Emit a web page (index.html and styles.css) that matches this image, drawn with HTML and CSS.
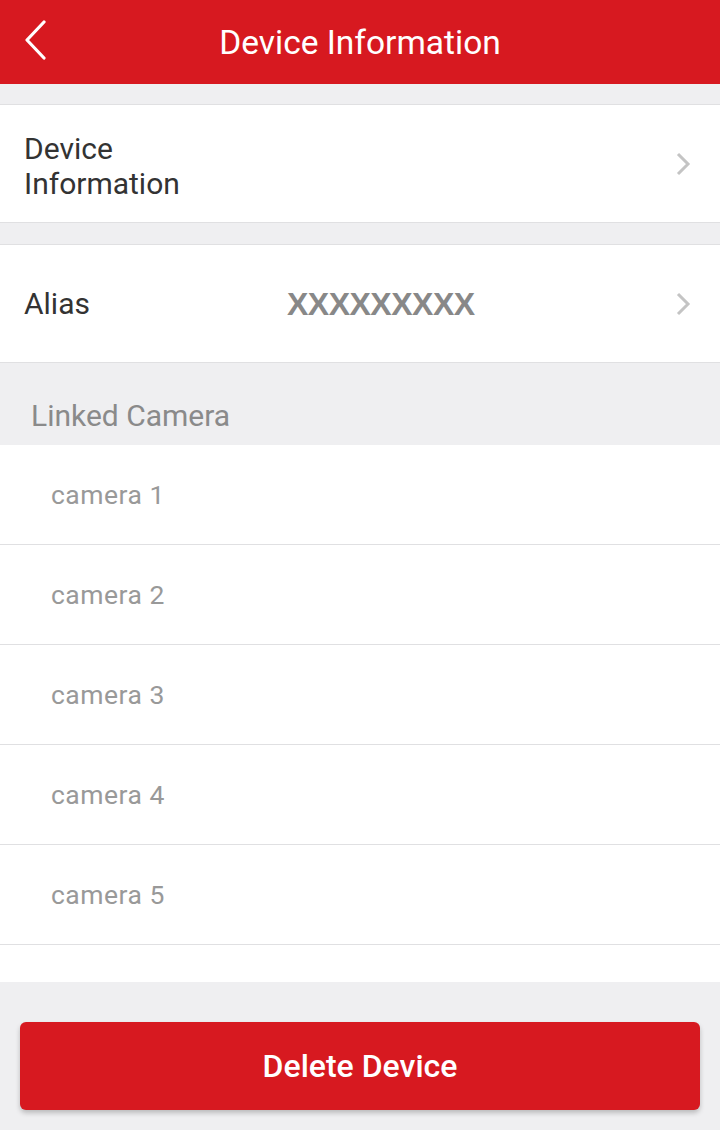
FILE: index.html
```html
<!DOCTYPE html>
<html>
<head>
  <meta charset="utf-8" />
  <title>Device Information</title>
  <link rel="stylesheet" href="styles.css">
</head>
<body>
  <div class="topbar">
    <button class="back-btn" aria-label="Back">
      <svg width="24" height="40" viewBox="0 0 24 40">
        <polyline points="21,2 4,20 21,38" fill="none" stroke="#fff" stroke-width="3.2" stroke-linecap="round" stroke-linejoin="round" />
      </svg>
    </button>
    <h1>Device Information</h1>
  </div>

  <div class="group">
    <div class="row">
      <span class="label label-wrap">Device Information</span>
      <svg class="arrow" width="16" height="26" viewBox="0 0 16 26">
        <polyline points="3,3 13,13 3,23" fill="none" stroke="#c4c4c4" stroke-width="3" />
      </svg>
    </div>
  </div>

  <div class="group group-second">
    <div class="row">
      <span class="label">Alias</span>
      <span class="value">XXXXXXXXX</span>
      <svg class="arrow" width="16" height="26" viewBox="0 0 16 26">
        <polyline points="3,3 13,13 3,23" fill="none" stroke="#c4c4c4" stroke-width="3" />
      </svg>
    </div>
  </div>

  <div class="section-title">Linked Camera</div>
  <ul class="camera-list">
    <li>camera 1</li>
    <li>camera 2</li>
    <li>camera 3</li>
    <li>camera 4</li>
    <li>camera 5</li>
  </ul>
  <div class="list-tail"></div>

  <div class="footer">
    <button class="delete-btn">Delete Device</button>
  </div>
</body>
</html>
```

FILE: styles.css
```css
:root {
  --red: #d71920;
  --bg-color: #efeff1;
  --line: #e0e0e2;
  --text-color: #333333;
}
body {
  margin: 0;
  font-family: Roboto, "Noto Sans", Arial, sans-serif;
  background-color: var(--bg-color);
  color: var(--text-color);
}
.topbar {
  height: 84px;
  background-color: var(--red);
  display: flex;
  align-items: center;
  justify-content: center;
  position: relative;
}
.topbar h1 {
  margin: 0;
  color: #fff;
  font-size: 33.5px;
  font-weight: 400;
}
.back-btn {
  position: absolute;
  left: 23px;
  top: 20px;
  background: none;
  border: none;
  padding: 0;
  line-height: 0;
}
.group {
  margin-top: 20px;
  background: #fff;
  border-top: 1px solid var(--line);
  border-bottom: 1px solid var(--line);
}
.group-second {
  margin-top: 21px;
}
.row {
  height: 117px;
  display: flex;
  align-items: center;
  padding: 0 29px 0 24px;
}
.label {
  font-size: 30px;
  line-height: 35px;
  color: var(--text-color);
}
.label-wrap {
  width: 170px;
  margin-top: 4px;
}
.value {
  margin-left: 197px;
  margin-top: 1px;
  font-family: "Liberation Sans", Arial, sans-serif;
  font-weight: 700;
  font-size: 32px;
  color: #888;
  letter-spacing: -0.5px;
}
.arrow {
  margin-left: auto;
}
.section-title {
  height: 82px;
  box-sizing: border-box;
  padding: 37px 0 0 31px;
  font-size: 30px;
  line-height: 32px;
  color: #8a8a8a;
}
.camera-list {
  list-style: none;
  margin: 0;
  padding: 0;
  background: #fff;
}
.camera-list li {
  height: 99px;
  border-bottom: 1px solid var(--line);
  display: flex;
  align-items: center;
  padding-left: 51px;
  font-size: 26.5px;
  letter-spacing: 0.5px;
  color: #999;
}
.list-tail {
  height: 37px;
  background: #fff;
}
.footer {
  padding: 40px 20px;
}
.delete-btn {
  display: block;
  width: 100%;
  height: 88px;
  background-color: var(--red);
  color: #fff;
  border: none;
  border-radius: 6px;
  box-shadow: 0 3px 5px rgba(0, 0, 0, 0.22);
  font-family: Roboto, Arial, sans-serif;
  font-size: 32px;
  font-weight: 500;
}
```
